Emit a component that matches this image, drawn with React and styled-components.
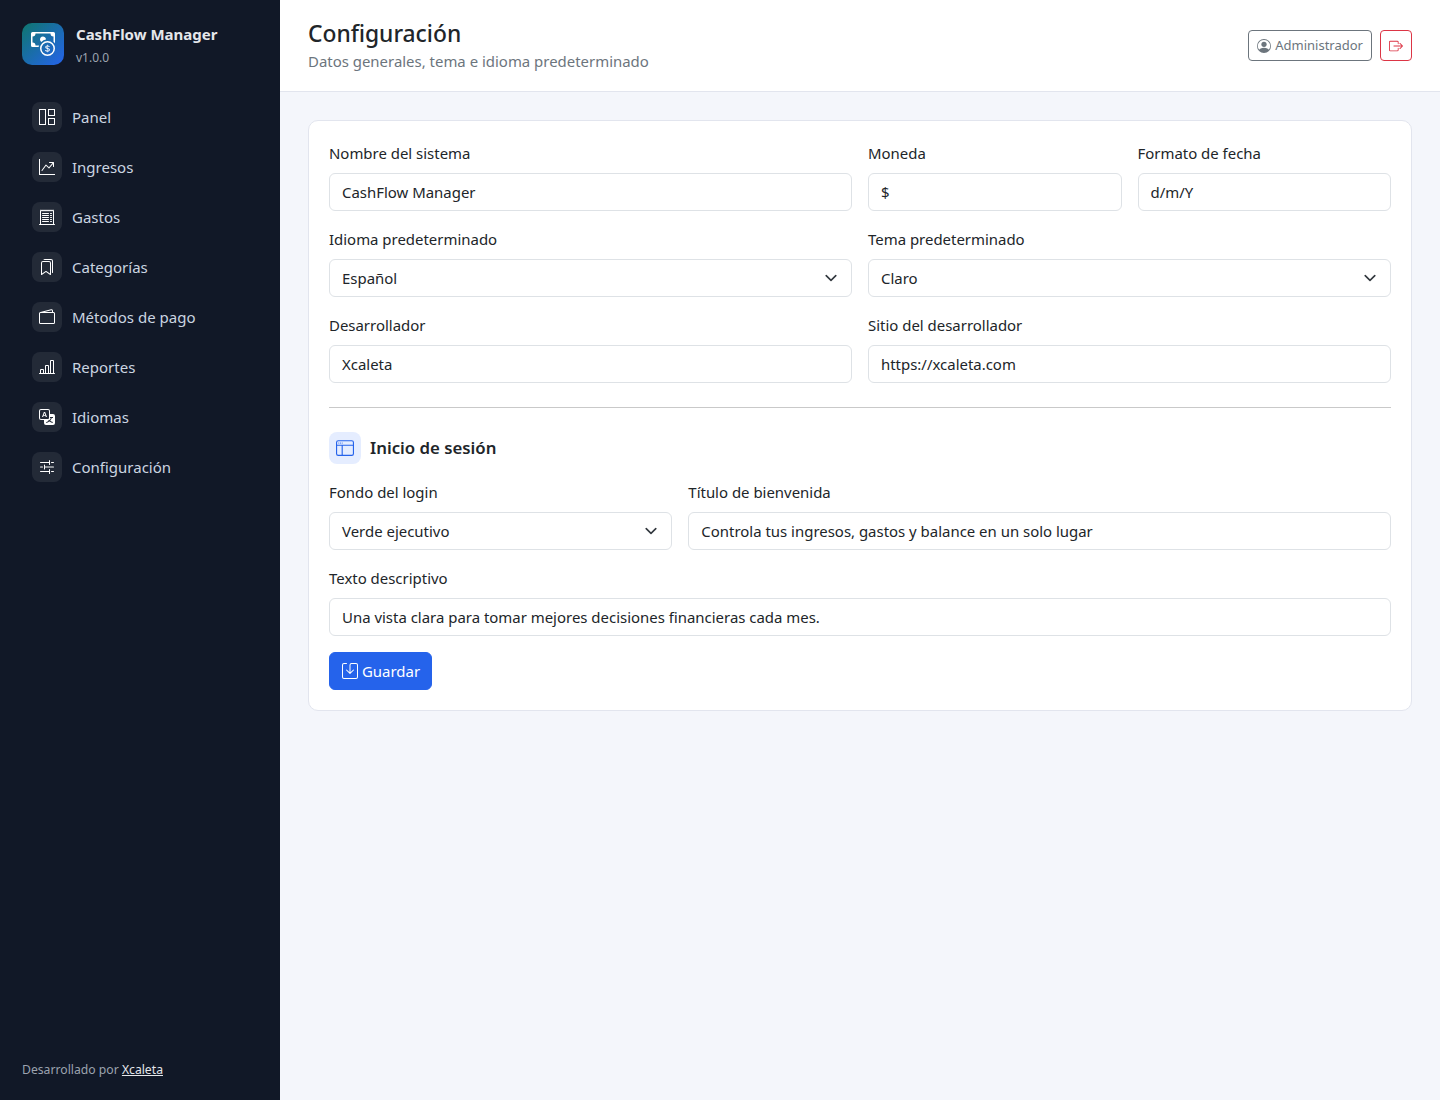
import React from 'react';
import styled, { createGlobalStyle } from 'styled-components';
import {
  BsGraphUpArrow, BsReceiptCutoff, BsBookmarks, BsWallet2, BsBarChartLine,
  BsTranslate, BsSliders2, BsCashCoin, BsPersonCircle, BsBoxArrowRight,
  BsWindowSidebar, BsSave,
} from 'react-icons/bs';

const GlobalStyle = createGlobalStyle`
  * { box-sizing: border-box; }
  body {
    margin: 0;
    background: #f4f6fb;
    color: #212529;
    font-family: "Noto Sans", sans-serif;
    font-size: 16px;
    line-height: 1.5;
  }
`;

function PanelIcon({ size }) {
  return (
    <svg width={size} height={size} viewBox="0 0 16 16" fill="none" stroke="currentColor">
      <rect x="0.5" y="0.5" width="6" height="15" />
      <rect x="9.5" y="0.5" width="6" height="6" />
      <rect x="9.5" y="9.5" width="6" height="6" />
    </svg>
  );
}

function SelectArrow() {
  return (
    <svg width="16" height="16" viewBox="0 0 16 16" fill="none" stroke="currentColor" strokeWidth="2" strokeLinecap="round" strokeLinejoin="round">
      <path d="m2 5 6 6 6-6" />
    </svg>
  );
}

const navItems = [
  { label: 'Panel', icon: PanelIcon },
  { label: 'Ingresos', icon: BsGraphUpArrow },
  { label: 'Gastos', icon: BsReceiptCutoff },
  { label: 'Categorías', icon: BsBookmarks },
  { label: 'Métodos de pago', icon: BsWallet2 },
  { label: 'Reportes', icon: BsBarChartLine },
  { label: 'Idiomas', icon: BsTranslate },
  { label: 'Configuración', icon: BsSliders2 },
];

export default function App() {
  return (
    <>
      <GlobalStyle />
      <Layout>
        <Sidebar>
          <Brand>
            <BrandLogo><BsCashCoin size={24} /></BrandLogo>
            <div>
              <BrandName>CashFlow Manager</BrandName>
              <BrandVersion>v1.0.0</BrandVersion>
            </div>
          </Brand>
          <Nav>
            {navItems.map(({ label, icon: Icon }) => (
              <NavItem href="#" key={label}>
                <NavIcon><Icon size={16} /></NavIcon>
                {label}
              </NavItem>
            ))}
          </Nav>
          <SidebarFooter>Desarrollado por <a href="#">Xcaleta</a></SidebarFooter>
        </Sidebar>

        <Main>
          <Header>
            <div>
              <Title>Configuración</Title>
              <Subtitle>Datos generales, tema e idioma predeterminado</Subtitle>
            </div>
            <HeaderActions>
              <UserButton><BsPersonCircle size={14} /> Administrador</UserButton>
              <LogoutButton><BsBoxArrowRight size={14} /></LogoutButton>
            </HeaderActions>
          </Header>

          <Content>
            <Card>
              <FormGrid>
                <Field span={6} label="Nombre del sistema" value="CashFlow Manager" />
                <Field span={3} label="Moneda" value="$" />
                <Field span={3} label="Formato de fecha" value="d/m/Y" />
                <SelectField span={6} label="Idioma predeterminado" value="Español" />
                <SelectField span={6} label="Tema predeterminado" value="Claro" />
                <Field span={6} label="Desarrollador" value="Xcaleta" />
                <Field span={6} label="Sitio del desarrollador" value="https://xcaleta.com" />
              </FormGrid>

              <Divider />

              <SectionHead>
                <SectionIcon><BsWindowSidebar size={18} /></SectionIcon>
                <SectionTitle>Inicio de sesión</SectionTitle>
              </SectionHead>

              <FormGrid>
                <SelectField span={4} label="Fondo del login" value="Verde ejecutivo" />
                <Field span={8} label="Título de bienvenida" value="Controla tus ingresos, gastos y balance en un solo lugar" />
                <Field span={12} label="Texto descriptivo" value="Una vista clara para tomar mejores decisiones financieras cada mes." />
              </FormGrid>

              <SaveButton><BsSave size={16} /> Guardar</SaveButton>
            </Card>
          </Content>
        </Main>
      </Layout>
    </>
  );
}

function Field({ span, label, value }) {
  return (
    <FieldWrap $span={span}>
      <Label>{label}</Label>
      <Input>{value}</Input>
    </FieldWrap>
  );
}

function SelectField({ span, label, value }) {
  return (
    <FieldWrap $span={span}>
      <Label>{label}</Label>
      <Input>
        {value}
        <Chevron><SelectArrow /></Chevron>
      </Input>
    </FieldWrap>
  );
}

const Layout = styled.div`
  display: flex;
  min-height: 1100px;
`;

const Sidebar = styled.aside`
  width: 280px;
  flex-shrink: 0;
  display: flex;
  flex-direction: column;
  background: #111827;
  padding: 23px 22px 20px;
`;

const Brand = styled.div`
  display: flex;
  align-items: center;
  gap: 12px;
  margin-bottom: 27px;
  height: 42px;
`;

const BrandLogo = styled.div`
  width: 42px;
  height: 42px;
  border-radius: 10px;
  display: flex;
  align-items: center;
  justify-content: center;
  color: #fff;
  background: linear-gradient(135deg, #0f766e, #2563eb);
`;

const BrandName = styled.div`
  color: #e5e7eb;
  font-size: 15px;
  font-weight: 700;
  line-height: 22px;
  margin-top: 3px;
`;

const BrandVersion = styled.div`
  color: #9ca3af;
  font-size: 12px;
  line-height: 22px;
  margin-top: 2px;
`;

const Nav = styled.nav`
  display: flex;
  flex-direction: column;
  flex: 1;
`;

const NavItem = styled.a`
  display: flex;
  align-items: center;
  gap: 10px;
  height: 50px;
  padding: 0 10px;
  color: #cbd5e1;
  text-decoration: none;
  font-size: 15px;
`;

const NavIcon = styled.span`
  width: 30px;
  height: 30px;
  border-radius: 8px;
  background: rgba(255, 255, 255, 0.08);
  color: #fff;
  display: flex;
  align-items: center;
  justify-content: center;
`;

const SidebarFooter = styled.div`
  color: #9ca3af;
  font-size: 12.2px;
  line-height: 20px;

  a {
    color: #e5e7eb;
  }
`;

const Main = styled.main`
  flex: 1;
  min-width: 0;
`;

const Header = styled.header`
  height: 92px;
  background: #fff;
  border-bottom: 1px solid #e2e5ee;
  padding: 0 28px;
  display: flex;
  align-items: center;
  justify-content: space-between;
`;

const Title = styled.h1`
  margin: 2px 0 2px;
  font-size: 22.8px;
  font-weight: 500;
  line-height: 27px;
`;

const Subtitle = styled.div`
  color: #6c757d;
  font-size: 14.95px;
  line-height: 24px;
`;

const HeaderActions = styled.div`
  display: flex;
  gap: 8px;
`;

const UserButton = styled.button`
  height: 31px;
  padding: 0 8px;
  display: flex;
  align-items: center;
  gap: 4px;
  background: transparent;
  border: 1px solid #6c757d;
  border-radius: 4px;
  color: #6c757d;
  font: inherit;
  font-size: 13px;
`;

const LogoutButton = styled.button`
  width: 32px;
  height: 31px;
  padding: 0;
  display: flex;
  align-items: center;
  justify-content: center;
  background: transparent;
  border: 1px solid #dc3545;
  border-radius: 4px;
  color: #dc3545;
`;

const Content = styled.div`
  padding: 28px;
`;

const Card = styled.section`
  background: #fff;
  border: 1px solid #e2e5ee;
  border-radius: 10px;
  padding: 20px;
`;

const FormGrid = styled.div`
  display: grid;
  grid-template-columns: repeat(12, minmax(0, 1fr));
  gap: 16px;
`;

const FieldWrap = styled.div`
  grid-column: span ${(p) => p.$span};
`;

const Label = styled.label`
  display: block;
  font-size: 14.95px;
  line-height: 24px;
  margin-bottom: 8px;
`;

const Input = styled.div`
  position: relative;
  height: 38px;
  padding: 0 12px;
  display: flex;
  align-items: center;
  border: 1px solid #dee2e6;
  border-radius: 6px;
  background: #fff;
  font-size: 14.95px;
`;

const Chevron = styled.span`
  position: absolute;
  right: 12px;
  top: 50%;
  transform: translateY(-50%) scale(0.8);
  display: flex;
  color: #343a40;
`;

const Divider = styled.hr`
  margin: 24px 0;
  border: 0;
  border-top: 1px solid #c9c9c9;
`;

const SectionHead = styled.div`
  display: flex;
  align-items: center;
  gap: 9px;
  margin-bottom: 16px;
`;

const SectionIcon = styled.span`
  width: 32px;
  height: 32px;
  border-radius: 8px;
  background: #e5edff;
  color: #2563eb;
  display: flex;
  align-items: center;
  justify-content: center;
`;

const SectionTitle = styled.h2`
  margin: 0;
  font-size: 16.8px;
  font-weight: 600;
  line-height: 22px;
`;

const SaveButton = styled.button`
  margin-top: 16px;
  height: 38px;
  padding: 0 11px 0 12px;
  display: flex;
  align-items: center;
  gap: 4px;
  background: #2563eb;
  border: 1px solid #2563eb;
  border-radius: 6px;
  color: #fff;
  font: inherit;
  font-size: 14.95px;
`;
